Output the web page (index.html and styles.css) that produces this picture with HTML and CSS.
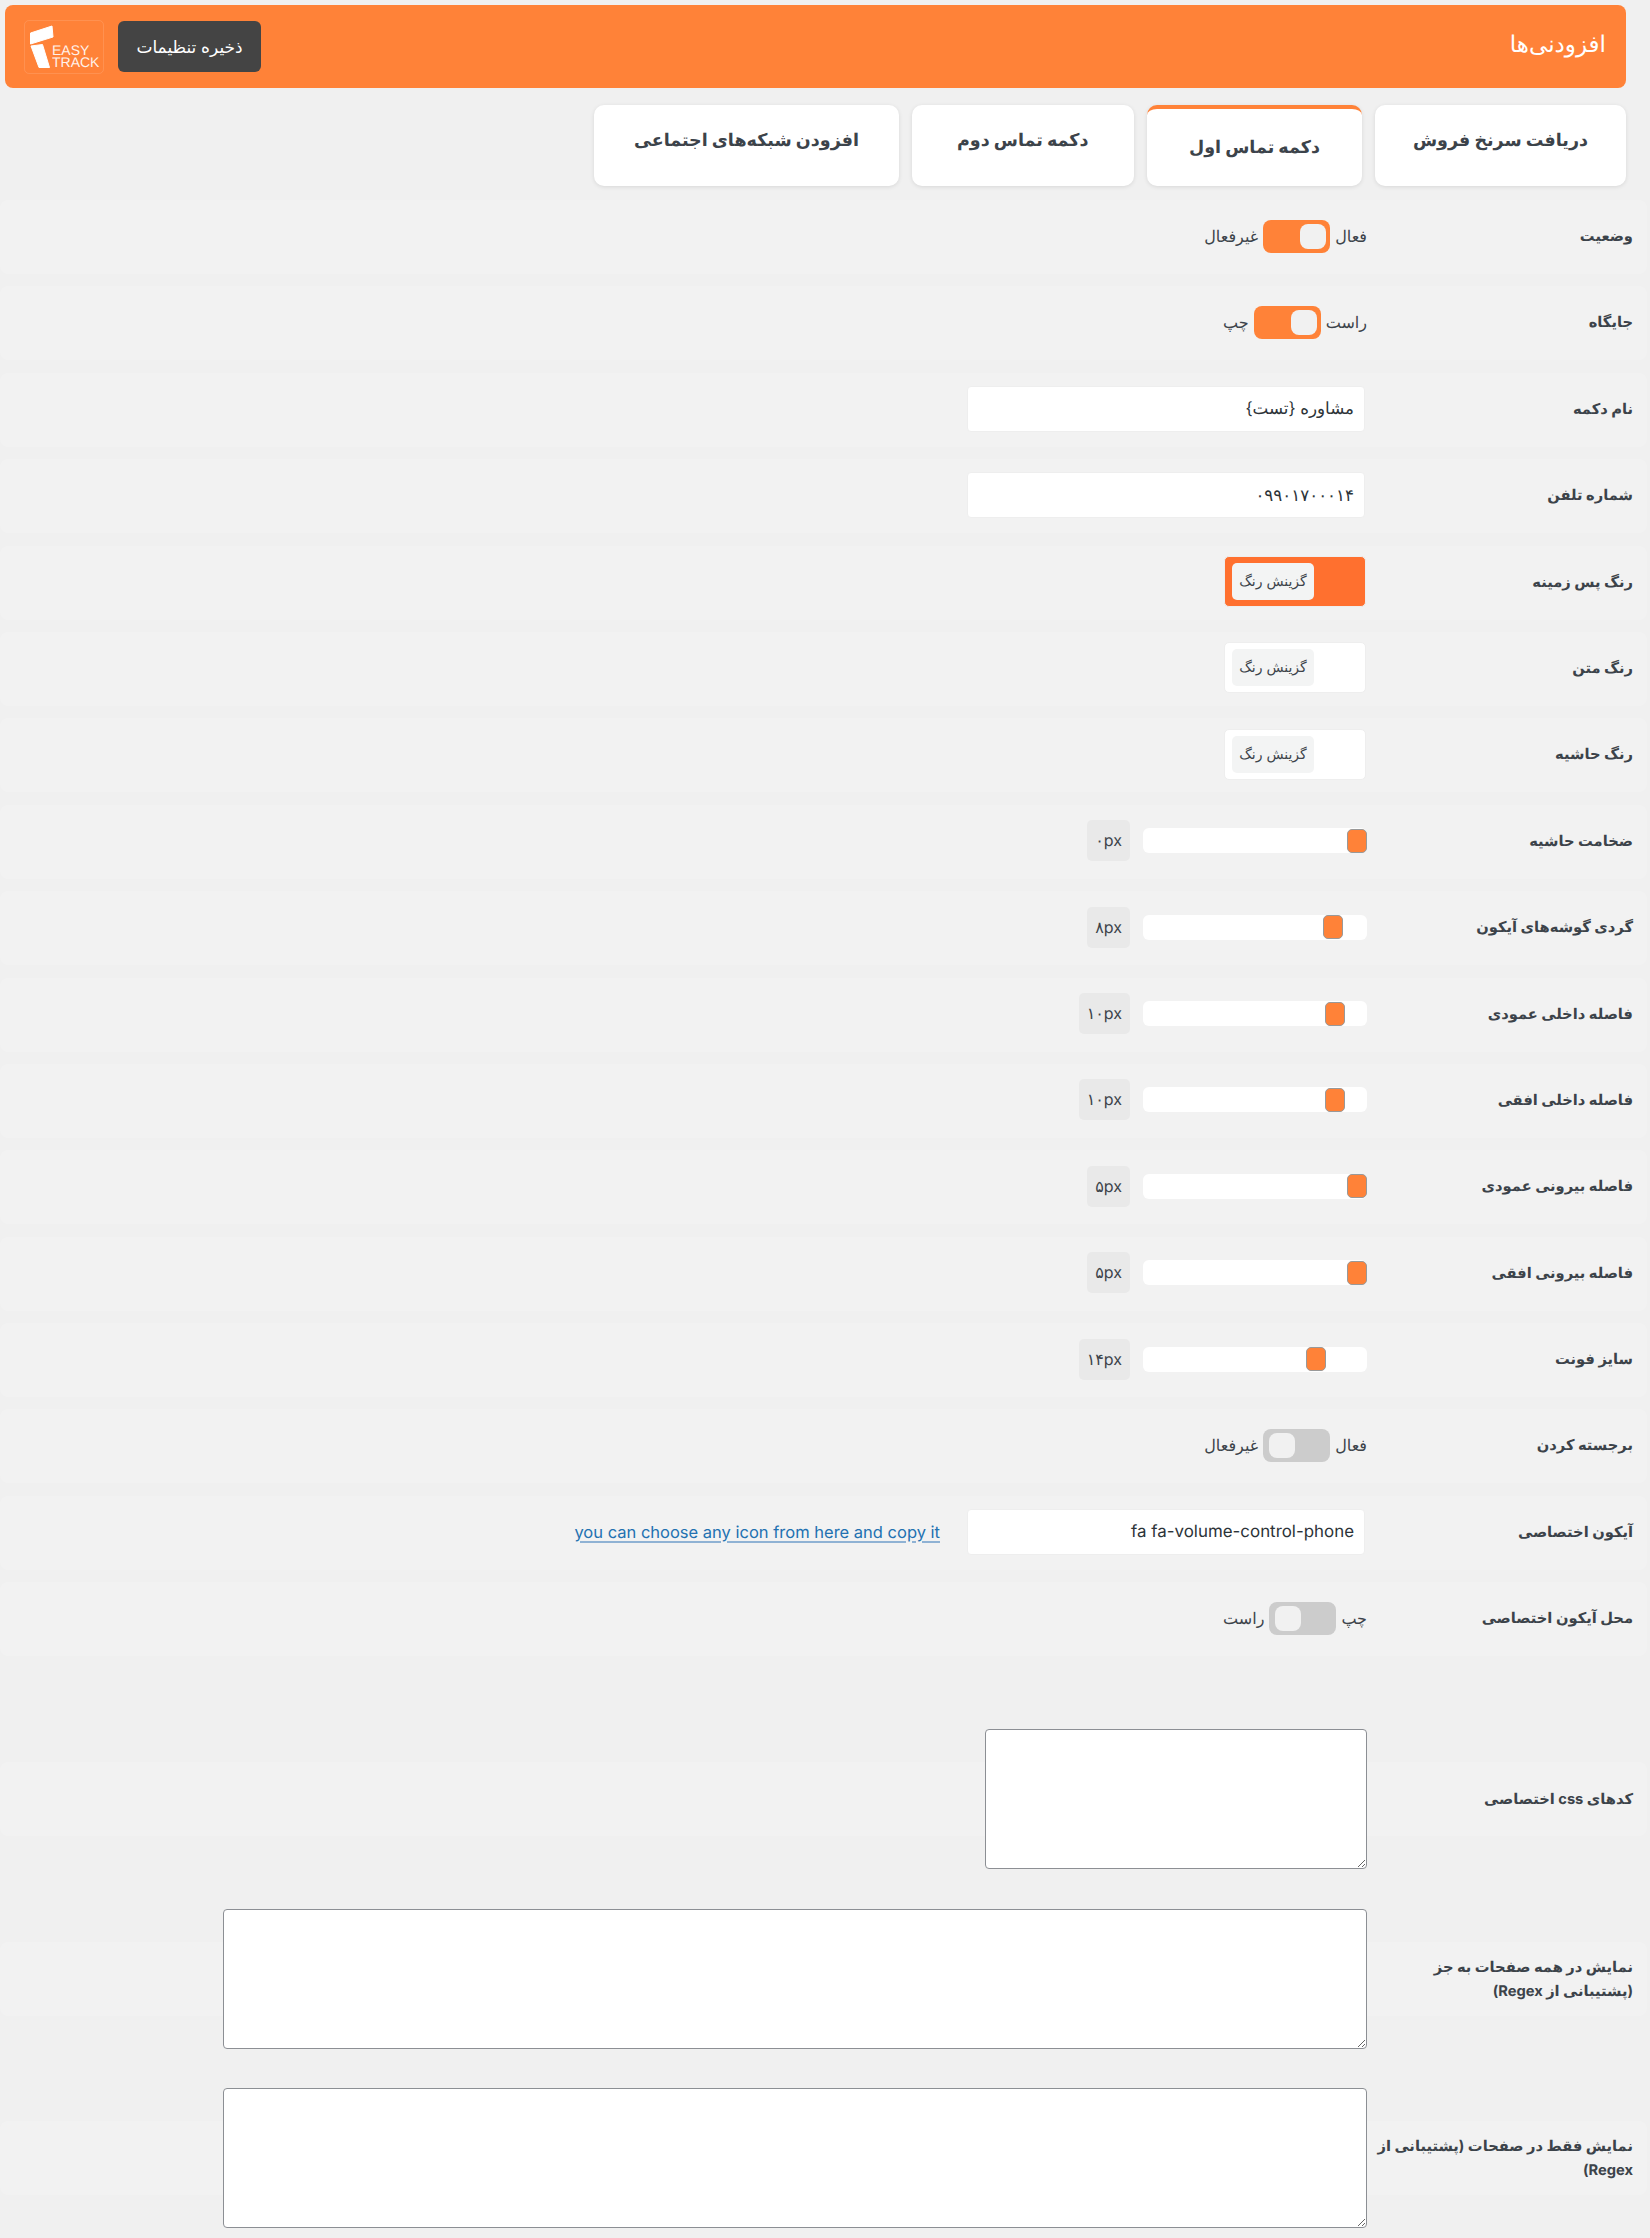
FILE: index.html
```html
<!DOCTYPE html>
<html dir="rtl" lang="fa">
<head>
<meta charset="utf-8">
<title>افزودنی‌ها</title>
<link rel="stylesheet" href="styles.css">
</head>
<body>
<div class="page">
    <header class="topbar">
        <h1 class="topbar_title">افزودنی‌ها</h1>
        <div class="topbar_actions">
            <button type="button" class="save_button">ذخیره تنظیمات</button>
            <div class="logo" dir="ltr">
                <svg class="logo_mark" viewBox="0 0 30 48" width="30" height="48">
                    <path d="M6.5 13 28 6 29 17 6.5 24Z" fill="#fff" stroke="#fff" stroke-linejoin="round"/>
                    <path d="M7 26 18.5 24.5 25.5 47.5 15 47.5Z" fill="#fff" stroke="#fff" stroke-linejoin="round"/>
                </svg>
                <span class="logo_text">EASY<br>TRACK</span>
            </div>
        </div>
    </header>

    <nav class="tabs">
        <a class="tab tab_first">دریافت سرنخ فروش</a>
        <a class="tab tab_active">دکمه تماس اول</a>
        <a class="tab tab_third">دکمه تماس دوم</a>
        <a class="tab">افزودن شبکه‌های اجتماعی</a>
    </nav>

    <form class="settings">
        <div class="row">
            <label class="row_label">وضعیت</label>
            <div class="toggle_group">
                <span>فعال</span>
                <span class="toggle toggle_on"><span class="knob"></span></span>
                <span>غیرفعال</span>
            </div>
        </div>
        <div class="row">
            <label class="row_label">جایگاه</label>
            <div class="toggle_group">
                <span>راست</span>
                <span class="toggle toggle_on"><span class="knob"></span></span>
                <span>چپ</span>
            </div>
        </div>
        <div class="row">
            <label class="row_label">نام دکمه</label>
            <input class="text_input" type="text" value="مشاوره {تست}">
        </div>
        <div class="row">
            <label class="row_label">شماره تلفن</label>
            <input class="text_input" type="text" value="۰۹۹۰۱۷۰۰۰۱۴">
        </div>
        <div class="row">
            <label class="row_label">رنگ پس زمینه</label>
            <div class="color_box color_orange"><span class="color_button">گزینش رنگ</span></div>
        </div>
        <div class="row">
            <label class="row_label">رنگ متن</label>
            <div class="color_box"><span class="color_button">گزینش رنگ</span></div>
        </div>
        <div class="row">
            <label class="row_label">رنگ حاشیه</label>
            <div class="color_box"><span class="color_button">گزینش رنگ</span></div>
        </div>
        <div class="row">
            <label class="row_label">ضخامت حاشیه</label>
            <input class="slider" type="range" min="0" max="100" value="0">
            <span class="slider_value">۰px</span>
        </div>
        <div class="row">
            <label class="row_label">گردی گوشه‌های آیکون</label>
            <input class="slider" type="range" min="0" max="100" value="12">
            <span class="slider_value">۸px</span>
        </div>
        <div class="row">
            <label class="row_label">فاصله داخلی عمودی</label>
            <input class="slider" type="range" min="0" max="100" value="11">
            <span class="slider_value">۱۰px</span>
        </div>
        <div class="row">
            <label class="row_label">فاصله داخلی افقی</label>
            <input class="slider" type="range" min="0" max="100" value="11">
            <span class="slider_value">۱۰px</span>
        </div>
        <div class="row">
            <label class="row_label">فاصله بیرونی عمودی</label>
            <input class="slider" type="range" min="0" max="100" value="0">
            <span class="slider_value">۵px</span>
        </div>
        <div class="row">
            <label class="row_label">فاصله بیرونی افقی</label>
            <input class="slider" type="range" min="0" max="100" value="0">
            <span class="slider_value">۵px</span>
        </div>
        <div class="row">
            <label class="row_label">سایز فونت</label>
            <input class="slider" type="range" min="0" max="100" value="20">
            <span class="slider_value">۱۴px</span>
        </div>
        <div class="row">
            <label class="row_label">برجسته کردن</label>
            <div class="toggle_group">
                <span>فعال</span>
                <span class="toggle"><span class="knob"></span></span>
                <span>غیرفعال</span>
            </div>
        </div>
        <div class="row">
            <label class="row_label">آیکون اختصاصی</label>
            <input class="text_input text_latin" type="text" value="fa fa-volume-control-phone">
            <a class="icon_link" href="#" dir="ltr">you can choose any icon from here and copy it</a>
        </div>
        <div class="row row_last">
            <label class="row_label">محل آیکون اختصاصی</label>
            <div class="toggle_group">
                <span>چپ</span>
                <span class="toggle"><span class="knob"></span></span>
                <span>راست</span>
            </div>
        </div>
        <div class="row row_tall">
            <label class="row_label">کدهای css اختصاصی</label>
            <textarea class="code_area code_small" dir="ltr"></textarea>
        </div>
        <div class="row row_tall">
            <label class="row_label">نمایش در همه صفحات به جز (پشتیبانی از Regex)</label>
            <textarea class="code_area code_wide" dir="ltr"></textarea>
        </div>
        <div class="row row_tall">
            <label class="row_label">نمایش فقط در صفحات (پشتیبانی از Regex)</label>
            <textarea class="code_area code_wide" dir="ltr"></textarea>
        </div>
    </form>
</div>
</body>
</html>
```

FILE: styles.css
```css
* {
    box-sizing: border-box;
}
html, body {
    margin: 0;
    padding: 0;
}
body {
    background-color: #f0f0f0;
    color: #3c434a;
    font-family: Inter, "DejaVu Sans", sans-serif;
    font-size: 15px;
    text-rendering: geometricPrecision;
}
.page {
    padding: 5px 3px 0 0;
}

/* header */
.topbar {
    display: flex;
    justify-content: space-between;
    align-items: center;
    height: 83px;
    margin: 0 21px 0 5px;
    padding: 0 20px 0 19px;
    background-color: #ff8238;
    border-radius: 8px;
}
.topbar_title {
    margin: 0 0 6px;
    color: #fff;
    font-size: 23px;
    font-weight: normal;
}
.topbar_actions {
    display: flex;
    align-items: center;
    gap: 14px;
}
.save_button {
    width: 143px;
    height: 51px;
    padding: 0;
    color: #fff;
    background-color: #444;
    border: none;
    border-radius: 6px;
    font-family: inherit;
    font-size: 17px;
}
.logo {
    display: flex;
    align-items: flex-end;
    width: 80px;
    height: 54px;
    border: 1px solid rgba(255, 255, 255, 0.12);
    border-radius: 5px;
}
.logo_mark {
    flex: none;
    margin-left: -1px;
    margin-bottom: 5px;
    margin-right: -2px;
}
.logo_text {
    margin-bottom: 5px;
    color: #fff;
    font-family: "Liberation Sans", sans-serif;
    font-size: 14px;
    line-height: 12px;
    opacity: 0.9;
}

/* tabs */
.tabs {
    display: flex;
    gap: 13px;
    margin: 17px 21px 14px 0;
}
.tab {
    display: flex;
    justify-content: center;
    align-items: center;
    height: 81px;
    padding: 0 39.5px 10px;
    color: #3c434a;
    background-color: #fff;
    border-radius: 10px;
    box-shadow: 0 1px 4px rgba(0, 0, 0, 0.1);
    font-size: 17.5px;
    font-weight: bold;
}
.tab_first {
    padding: 0 38px 10px;
}
.tab_third {
    padding: 0 45.5px 10px;
}
.tab_active {
    padding: 0 42px;
    border-top: 4px solid #ff8238;
}

/* rows */
.row {
    display: flex;
    align-items: center;
    gap: 15px;
    height: 74px;
    margin-bottom: 12.4px;
    padding-right: 14px;
    padding-bottom: 2px;
    background-color: #f2f2f2;
    border-radius: 8px;
}
.row_last {
    margin-bottom: 106px;
}
.row_tall {
    margin-bottom: 105.5px;
    padding-bottom: 0;
}
.row_label {
    flex: none;
    width: 258px;
    margin-left: -7px;
    font-size: 14.7px;
    font-weight: bold;
    line-height: 24px;
}

/* toggles */
.toggle_group {
    display: flex;
    align-items: center;
    gap: 5px;
    font-size: 16px;
}
.toggle {
    display: flex;
    align-items: center;
    justify-content: flex-end;
    width: 67px;
    height: 33px;
    padding: 0 6px;
    background-color: #ccc;
    border-radius: 8px;
}
.toggle_on {
    justify-content: flex-start;
    background-color: #ff8238;
    padding: 0 4px;
}
.knob {
    width: 26px;
    height: 25px;
    background-color: #f1f1f1;
    border-radius: 8px;
}

/* inputs */
.text_input {
    width: 398px;
    height: 46px;
    margin-right: 2px;
    padding: 0 10px;
    color: #2c3338;
    background-color: #fff;
    border: 1px solid #eee;
    border-radius: 4px;
    font-family: inherit;
    font-size: 16.7px;
    text-rendering: geometricPrecision;
}
.text_latin {
    font-size: 16.9px;
}
.icon_link {
    margin-right: 12px;
    color: #2271b1;
    font-size: 16.5px;
    text-decoration: underline;
    text-decoration-color: #8fb2d4;
    text-decoration-thickness: 2px;
    text-underline-offset: 3px;
}

/* colour pickers */
.color_box {
    display: flex;
    justify-content: flex-end;
    align-items: center;
    width: 142px;
    height: 51px;
    margin-right: 1px;
    padding: 0 7px;
    background-color: #fff;
    border: 1px solid #eee;
    border-radius: 5px;
}
.color_orange {
    background-color: #ff702f;
}
.color_button {
    display: flex;
    justify-content: center;
    align-items: center;
    width: 82px;
    height: 37px;
    background-color: #f3f4f4;
    border-radius: 5px;
    font-size: 14px;
}

/* sliders */
.slider {
    width: 224px;
    height: 25px;
    margin: 0;
    background-color: #fff;
    border-radius: 6px;
    -webkit-appearance: none;
    appearance: none;
}
.slider::-webkit-slider-thumb {
    width: 20px;
    height: 24px;
    background-color: #ff8238;
    border: 1px solid #999;
    border-radius: 5px;
    -webkit-appearance: none;
    appearance: none;
}
.slider_value {
    margin-right: -2px;
    padding: 10px 8px;
    background-color: #e9e9e9;
    border-radius: 5px;
    font-size: 16px;
    line-height: 21px;
}

/* textareas */
.code_area {
    flex: none;
    height: 140px;
    background-color: #fff;
    border: 1px solid #8c8f94;
    border-radius: 4px;
}
.code_small {
    width: 382px;
}
.code_wide {
    width: 1144px;
}
```
